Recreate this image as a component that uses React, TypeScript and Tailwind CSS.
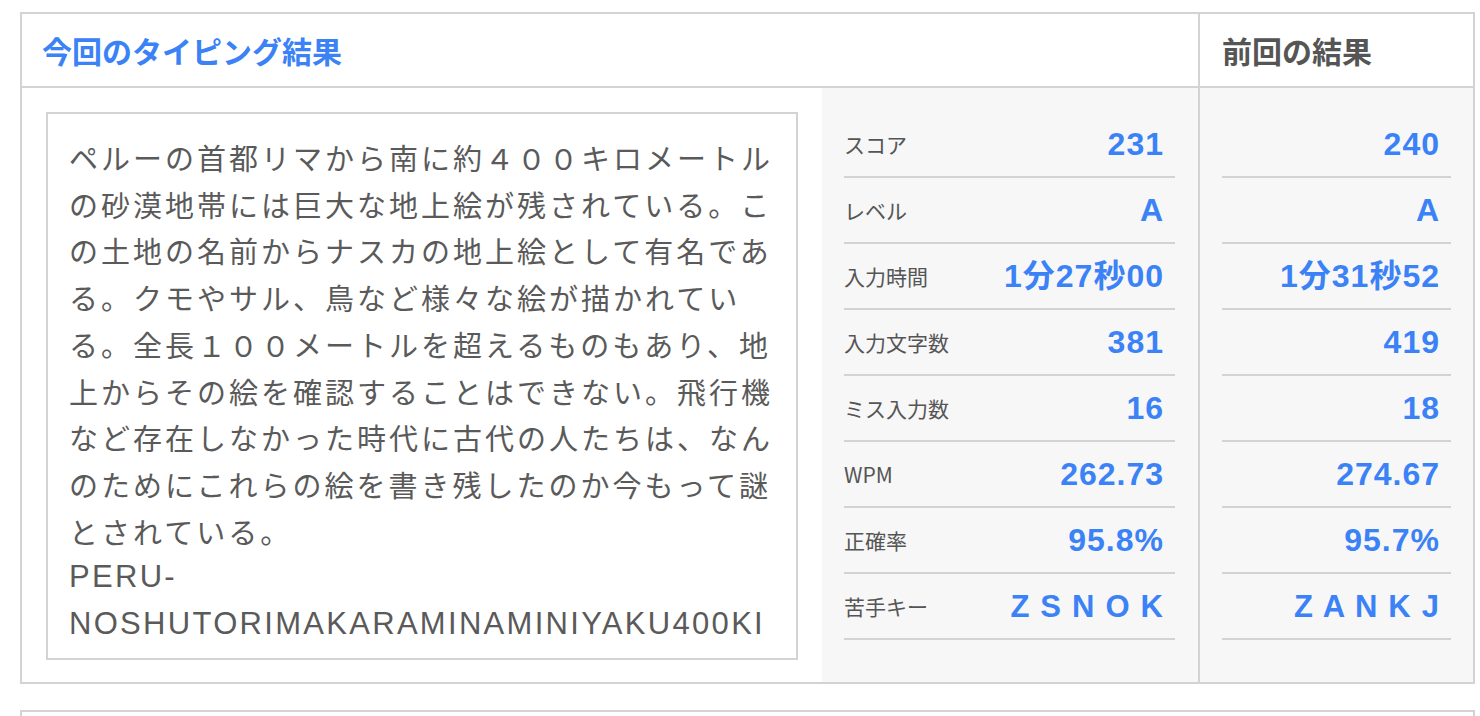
import React from "react";

const lines = [
  "ペルーの首都リマから南に約４００キロメートル",
  "の砂漠地帯には巨大な地上絵が残されている。こ",
  "の土地の名前からナスカの地上絵として有名であ",
  "る。クモやサル、鳥など様々な絵が描かれてい",
  "る。全長１００メートルを超えるものもあり、地",
  "上からその絵を確認することはできない。飛行機",
  "など存在しなかった時代に古代の人たちは、なん",
  "のためにこれらの絵を書き残したのか今もって謎",
  "とされている。",
];

type Row = { label: string; cur: string; prev: string; keys?: boolean };

const rows: Row[] = [
  { label: "スコア", cur: "231", prev: "240" },
  { label: "レベル", cur: "A", prev: "A" },
  { label: "入力時間", cur: "1分27秒00", prev: "1分31秒52" },
  { label: "入力文字数", cur: "381", prev: "419" },
  { label: "ミス入力数", cur: "16", prev: "18" },
  { label: "WPM", cur: "262.73", prev: "274.67" },
  { label: "正確率", cur: "95.8%", prev: "95.7%" },
  { label: "苦手キー", cur: "Z S N O K", prev: "Z A N K J", keys: true },
];

function Value({ v, keys }: { v: string; keys?: boolean }) {
  return (
    <span
      className={
        keys
          ? "font-['Liberation_Sans','Noto_Sans_CJK_JP',sans-serif] font-bold text-[31px] tracking-[1.2px] mr-[-1.2px] text-[#3b82f6] whitespace-pre leading-none"
          : "font-['Liberation_Sans','Noto_Sans_CJK_JP',sans-serif] font-bold text-[32px] tracking-[1px] mr-[-1px] text-[#3b82f6] whitespace-nowrap leading-none"
      }
    >
      {v}
    </span>
  );
}

export default function App() {
  return (
    <div className="min-h-[716px] bg-white pt-[12px] pl-[20px] font-['Noto_Sans_CJK_JP',sans-serif]">
      <div className="w-[1455px] border-2 border-[#d3d3d3]">
        {/* header */}
        <div className="flex h-[72px]">
          <div className="w-[1178px] border-r-2 border-[#d3d3d3] pl-[20px] flex items-center">
            <span className="text-[30px] font-bold text-[#3b82f6] leading-none">今回のタイピング結果</span>
          </div>
          <div className="flex-1 pl-[22px] flex items-center">
            <span className="text-[30px] font-bold text-[#555555] leading-none">前回の結果</span>
          </div>
        </div>
        {/* body */}
        <div className="flex border-t-2 border-[#d3d3d3] h-[596px]">
          <div className="w-[1178px] border-r-2 border-[#d3d3d3] flex">
            <div className="w-[800px] bg-white pl-[24px] pt-[24px]">
              <div className="w-[752px] h-[548px] border-2 border-[#d3d3d3] pl-[21px] pt-[20px] overflow-hidden text-[#5a5a5a]">
                {lines.map((l, i) => (
                  <div key={i} className="text-[29px] leading-[46.7px] tracking-[3px] whitespace-nowrap">
                    {l}
                  </div>
                ))}
                <div className="font-['Liberation_Sans','Noto_Sans_CJK_JP',sans-serif] text-[31px] leading-[46.7px] tracking-[2.3px] whitespace-nowrap">
                  PERU-
                </div>
                <div className="font-['Liberation_Sans','Noto_Sans_CJK_JP',sans-serif] text-[31px] leading-[46.7px] tracking-[2.3px] whitespace-nowrap">
                  NOSHUTORIMAKARAMINAMINIYAKU400KI
                </div>
              </div>
            </div>
            <div className="w-[376px] bg-[#f7f7f7] pl-[22px] pr-[23px] pt-[24px]">
              {rows.map((r) => (
                <div key={r.label} className="h-[66px] border-b-2 border-[#d3d3d3] flex items-center justify-between pr-[12px]">
                  <span className="text-[21px] text-[#555555] leading-none">{r.label}</span>
                  <Value v={r.cur} keys={r.keys} />
                </div>
              ))}
            </div>
          </div>
          <div className="flex-1 bg-[#f7f7f7] px-[22px] pt-[24px]">
            {rows.map((r) => (
              <div key={r.label} className="h-[66px] border-b-2 border-[#d3d3d3] flex items-center justify-end pr-[12px]">
                <Value v={r.prev} keys={r.keys} />
              </div>
            ))}
          </div>
        </div>
      </div>
      <div className="mt-[26px] w-[1455px] h-[80px] border-2 border-[#d3d3d3]"></div>
    </div>
  );
}
